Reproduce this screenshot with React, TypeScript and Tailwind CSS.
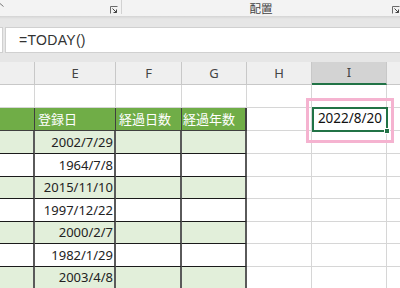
import React from "react";

const font = { fontFamily: '"Noto Sans", "Noto Sans CJK JP", sans-serif' };

const dates = ["2002/7/29", "1964/7/8", "2015/11/10", "1997/12/22", "2000/2/7", "1982/1/29", "2003/4/8"];
const dataH = ["h-[23px]", "h-[23px]", "h-[22px]", "h-[23px]", "h-[22px]", "h-[23px]", "h-[22px]"];

function Launcher() {
  return (
    <svg width="8" height="8" viewBox="0 0 8 8" className="block">
      <path d="M0.5 7.5V0.5H7.5" fill="none" stroke="#6b6b6b" strokeWidth="1" />
      <path d="M2.5 2.5L6.5 6.5M6.5 3.5V6.5H3.5" fill="none" stroke="#444" strokeWidth="1" />
    </svg>
  );
}

function GrayCells({ h }: { h: string }) {
  return (
    <>
      <div className={`w-[65px] ${h} border-r border-b border-[#d6d6d6] bg-white`} />
      <div className={`w-[75px] ${h} border-r border-b border-[#d6d6d6] bg-white`} />
      <div className={`flex-1 ${h} border-b border-[#d6d6d6] bg-white`} />
    </>
  );
}

export default function App() {
  return (
    <div className="relative w-[400px] h-[288px] overflow-hidden bg-[#e6e6e6]" style={font}>
      {/* ribbon bottom */}
      <div className="relative h-[16px] bg-[#f3f3f3] flex items-start">
        <div className="w-[122px] h-[14px] border-r border-[#d2d2d2] flex justify-end items-end pr-[3px] pb-[0px]">
          <Launcher />
        </div>
        <div className="flex-1 flex justify-center">
          <span className="text-[11.5px] leading-none text-[#444] mt-[3px] ml-[8px]">配置</span>
        </div>
        <div className="w-[8px] h-[14px] flex items-end">
          <Launcher />
        </div>
        <div className="absolute left-0 top-[3px] w-[4px] h-[4px]">
          <svg width="4" height="4" viewBox="0 0 4 4"><path d="M0 0.5L3.5 3.5" stroke="#777" strokeWidth="1" /></svg>
        </div>
      </div>
      <div className="h-[3px] bg-gradient-to-b from-[#d4d4d4] to-[#e6e6e6]" />
      {/* formula bar */}
      <div className="mt-[8px] flex h-[26px]">
        <div className="w-[3px] h-full bg-white border-y border-r border-[#d0d0d0]" />
        <div className="ml-[2px] flex-1 h-full bg-white border-y border-l border-[#d0d0d0] flex items-center pl-[13px]">
          <span className="text-[14px] text-[#333] tracking-[0.3px]" style={{ fontFamily: '"Liberation Sans", Arial, sans-serif' }}>=TODAY()</span>
        </div>
      </div>
      {/* grid */}
      <div className="mt-[9px] text-[13px] leading-none">
        {/* column headers */}
        <div className="flex h-[23px] text-[#444]">
          <div className="w-[35px] h-full bg-[#efefef] border-r border-b border-[#c8c8c8]" />
          <div className="w-[81px] h-full bg-[#efefef] border-r border-b border-[#c8c8c8] flex items-center justify-center">E</div>
          <div className="w-[66px] h-full bg-[#efefef] border-r border-b border-[#c8c8c8] flex items-center justify-center">F</div>
          <div className="w-[65px] h-full bg-[#efefef] border-r border-b border-[#c8c8c8] flex items-center justify-center">G</div>
          <div className="w-[65px] h-full bg-[#efefef] border-r border-b border-[#c8c8c8] flex items-center justify-center">H</div>
          <div className="w-[75px] h-full bg-[#d3d3d3] border-r border-[#c8c8c8] border-b-2 border-b-[#217346] flex items-center justify-center">I</div>
          <div className="flex-1 h-full bg-[#efefef] border-b border-[#c8c8c8]" />
        </div>
        {/* row 1 blank */}
        <div className="flex h-[23px]">
          <div className="w-[35px] h-full bg-white border-r border-b border-[#d6d6d6]" />
          <div className="w-[81px] h-full bg-white border-r border-b border-[#d6d6d6]" />
          <div className="w-[66px] h-full bg-white border-r border-b border-[#d6d6d6]" />
          <div className="w-[65px] h-full bg-white border-r border-b border-[#d6d6d6]" />
          <GrayCells h="h-full" />
        </div>
        {/* table header */}
        <div className="flex h-[23px]">
          <div className="w-[35px] h-full bg-[#70ad47] border-r border-b border-[#3f3f3f]" />
          <div className="w-[81px] h-full bg-[#70ad47] border-r border-b border-[#3f3f3f] text-white flex items-center pl-[3px]">登録日</div>
          <div className="w-[66px] h-full bg-[#70ad47] border-r border-b border-[#3f3f3f] text-white flex items-center pl-[3px]">経過日数</div>
          <div className="w-[65px] h-full bg-[#70ad47] border-r-2 border-b border-[#3f3f3f] text-white flex items-center pl-[1px] overflow-hidden whitespace-nowrap">経過年数</div>
          <div className="w-[65px] h-full border-r border-b border-[#d6d6d6] bg-white" />
          <div className="w-[75px] h-full border-r border-b border-[#d6d6d6] bg-white flex items-center justify-end pr-[4px] text-[#111] text-[13.5px]">2022/8/20</div>
          <div className="flex-1 h-full border-b border-[#d6d6d6] bg-white" />
        </div>
        {dates.map((d, i) => {
          const bg = i % 2 === 0 ? "bg-[#e2efda]" : "bg-white";
          const h = dataH[i];
          return (
            <div key={d} className={`flex ${h}`}>
              <div className={`w-[35px] h-full ${bg} border-r-2 border-r-[#5a5a5a] border-b border-b-[#1a1a1a]`} />
              <div className={`w-[81px] h-full ${bg} border-r-2 border-r-[#5a5a5a] border-b border-b-[#1a1a1a] flex items-center justify-end pr-[1px] text-[#222]`}>{d}</div>
              <div className={`w-[66px] h-full ${bg} border-r-2 border-r-[#5a5a5a] border-b border-b-[#1a1a1a]`} />
              <div className={`w-[65px] h-full ${bg} border-r-2 border-r-[#5a5a5a] border-b border-b-[#1a1a1a]`} />
              <GrayCells h="h-full" />
            </div>
          );
        })}
      </div>
      {/* selected cell outline */}
      <div className="absolute left-[312px] top-[107px] w-[76px] h-[25px] border-2 border-[#217346]">
        <div className="absolute right-[-4px] bottom-[-4px] w-[6px] h-[6px] bg-[#217346] border border-white" />
      </div>
      {/* pink annotation */}
      <div className="absolute left-[306px] top-[98px] w-[88px] h-[45px] border-[3px] border-[#f5b3d0]" />
    </div>
  );
}
